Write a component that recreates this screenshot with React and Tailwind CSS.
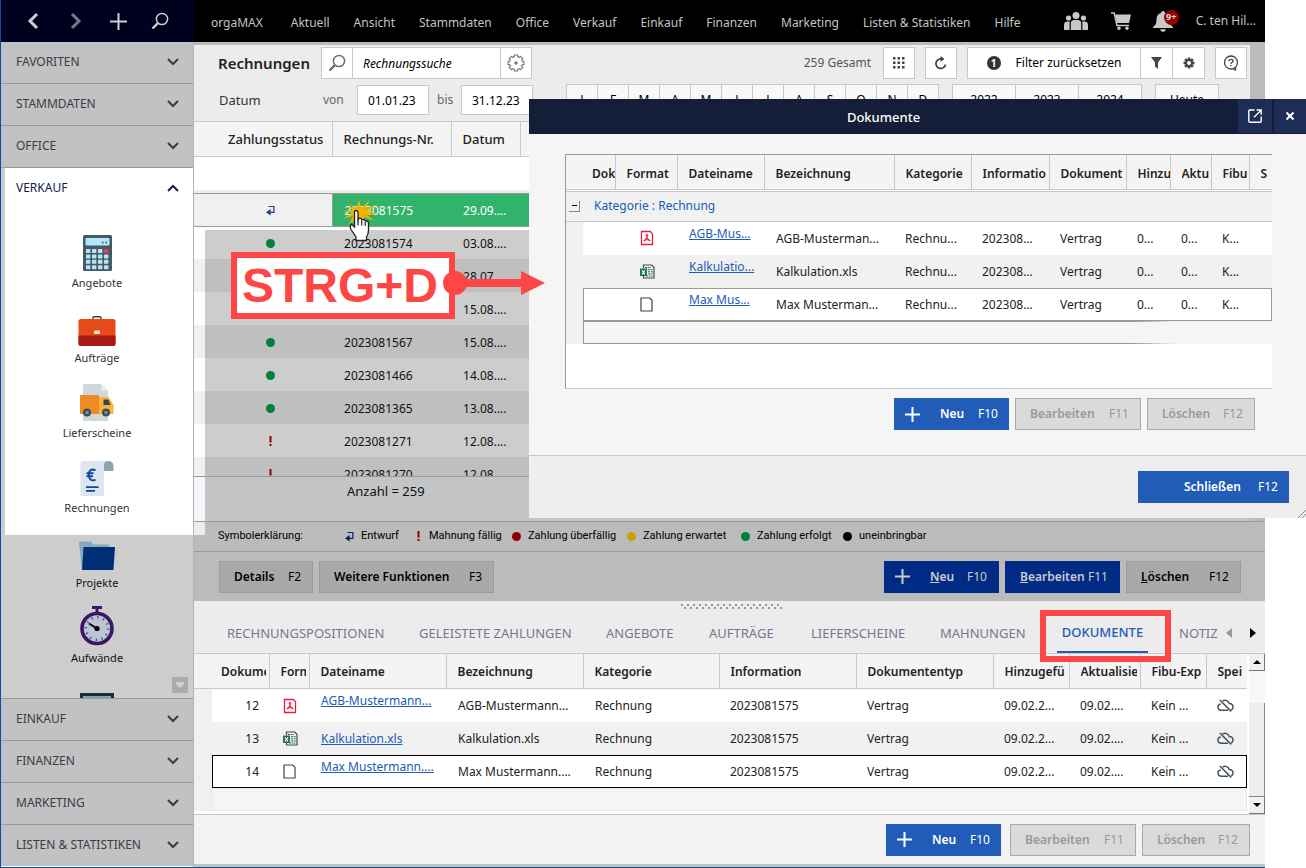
import React from 'react';

const MENU = ['Aktuell', 'Ansicht', 'Stammdaten', 'Office', 'Verkauf', 'Einkauf', 'Finanzen', 'Marketing', 'Listen & Statistiken', 'Hilfe'];

const INVOICES = [
  ['ok', '2023081574', '03.08....'],
  ['', '', '28.07....'],
  ['', '', '15.08....'],
  ['ok', '2023081567', '15.08....'],
  ['ok', '2023081466', '14.08....'],
  ['ok', '2023081365', '13.08....'],
  ['due', '2023081271', '12.08....'],
  ['due', '2023081270', '12.08....'],
];

const FILES = [
  { nr: '12', icon: 'pdf', link: 'AGB-Mustermann...', name: 'AGB-Mustermann...', shortLink: 'AGB-Mus...', shortName: 'AGB-Musterman...' },
  { nr: '13', icon: 'xls', link: 'Kalkulation.xls', name: 'Kalkulation.xls', shortLink: 'Kalkulatio...', shortName: 'Kalkulation.xls' },
  { nr: '14', icon: 'doc', link: 'Max Mustermann....', name: 'Max Mustermann....', shortLink: 'Max Mus...', shortName: 'Max Musterman...' },
];

function Chevron({ up }) {
  return (
    <svg width="12" height="8" viewBox="0 0 12 8" fill="none" stroke="currentColor" strokeWidth="2">
      <path d={up ? 'M1 7 6 2l5 5' : 'M1 1l5 5 5-5'} />
    </svg>
  );
}

function Magnifier({ size, stroke }) {
  return (
    <svg width={size} height={size} viewBox="0 0 18 18" fill="none" stroke="currentColor" strokeWidth={stroke}>
      <circle cx="11" cy="7" r="5.6" />
      <path d="M7 11 1.5 16.5" strokeWidth={stroke * 1.6} />
    </svg>
  );
}

function Plus() {
  return (
    <svg width="15" height="15" viewBox="0 0 15 15" stroke="currentColor" strokeWidth="2">
      <path d="M7.5 0v15M0 7.5h15" />
    </svg>
  );
}

function DraftIcon() {
  return (
    <svg width="9" height="11" viewBox="0 0 9 11" fill="none" stroke="currentColor" strokeWidth="1.2">
      <path d="M2.5 1.5h5.4v5.8H2.5" />
      <path d="M4.6 4v6.6L0 7.3z" fill="currentColor" stroke="none" />
    </svg>
  );
}

function FileIcon({ kind }) {
  if (kind === 'pdf') {
    return (
      <svg className="block" width="14" height="16" viewBox="0 0 14 16" fill="none" stroke="#e31b3c" strokeWidth="1.3">
        <path d="M1.5 1.5h8.8l2.2 2.4v10.6h-11z" />
        <path d="M7 4.600v3.200M7 7.800l-2.800 2.800M7 7.800l2.800 2.800" strokeWidth="1.200" />
        <circle cx="7" cy="5.300" r="1" strokeWidth=".8" />
        <path d="M3.600 10.200c.4 1.300 1.800.6 2.300-.4h2.200c.5 1 1.900 1.700 2.300.4" strokeWidth=".9" />
      </svg>
    );
  }
  if (kind === 'xls') {
    return (
      <svg className="block" width="15" height="15" viewBox="0 0 15 15" fill="none">
        <path d="M3.500 4V1h8.200l2.300 2.300V14H3.500v-2" stroke="#4a4a4a" strokeWidth="1.200" />
        <path d="M5 3.500h6M8 5.700h5M8 7.800h5M8 9.900h5M6 12h6.500" stroke="#217346" strokeWidth="1" strokeDasharray="2 .7" />
        <path d="M0 4.500h7v7.500H0z" fill="#217346" />
        <path d="M2 6.300l3 4M5 6.300l-3 4" stroke="#fff" strokeWidth="1.100" />
      </svg>
    );
  }
  return (
    <svg className="block" width="13" height="15" viewBox="0 0 13 15" fill="#fff" stroke="#444" strokeWidth="1.200">
      <path d="M1 1h8.700L12 3.300V14H1z" />
    </svg>
  );
}

function CloudOff() {
  return (
    <svg className="block" width="17" height="13" viewBox="0 0 17 13" fill="none" stroke="#45525c" strokeWidth="1.500">
      <path d="M5.500 2.200C8 .4 11.600 1.600 12.200 4.600c2.200.1 3.800 1.600 3.800 3.500 0 1.300-.7 2.400-1.700 3" />
      <path d="M11 11.300H4.300C2.300 11.300.9 9.900.9 8.100c0-1.700 1.300-3 2.900-3.200" />
      <path d="M2.800 1l11.400 11.400" />
    </svg>
  );
}

function CalculatorIcon() {
  const keys = [];
  for (let r = 0; r < 4; r++) {
    for (let c = 0; c < 4; c++) {
      keys.push(<rect key={`${r}-${c}`} x={3 + c * 6} y={14 + r * 5.400} width="4.400" height="4" rx=".6" fill={r === 0 && c === 3 ? '#f23b4e' : '#b9e3f5'} />);
    }
  }
  return (
    <svg width="29" height="36" viewBox="0 0 29 36">
      <rect width="29" height="36" rx="1.500" fill="#455a64" />
      <rect x="2.500" y="3" width="24" height="7.500" rx="1" fill="#b3e5fc" />
      <path d="M19 7.500h1.500M22.500 7.500H24" stroke="#37474f" strokeWidth="1.500" />
      {keys}
    </svg>
  );
}

function BriefcaseIcon() {
  return (
    <svg width="38" height="30" viewBox="0 0 38 30">
      <path d="M15 4V1.500q0-.8.8-.8h6.400q.8 0 .8.800V4" fill="none" stroke="#424242" strokeWidth="1.400" />
      <rect x=".5" y="3" width="37" height="27" rx="2.500" fill="#e64a19" />
      <path d="M.5 19.500h37v8q0 2.500-2.500 2.500H3q-2.500 0-2.500-2.500z" fill="#a81815" />
      <rect x="16" y="14.500" width="6" height="3.500" rx=".8" fill="#fbe3cd" />
    </svg>
  );
}

function TruckIcon() {
  return (
    <svg width="36" height="37" viewBox="0 0 36 37">
      <path d="M4 0h18.500L29 6.500V37H4z" fill="#cfd8dc" />
      <path d="M22.500 0 29 6.500h-6.500z" fill="#eceff1" />
      <path d="M1 11h19v19H1z" fill="#ef8b22" />
      <path d="M20 13h9.500l5 8v9H20z" fill="#fbb03f" />
      <path d="M24.500 15.500h5l2 5.500h-7z" fill="#37474f" />
      <circle cx="8" cy="28.500" r="4" fill="#37515c" /><circle cx="8" cy="28.500" r="1.700" fill="#78909c" />
      <circle cx="27" cy="28.500" r="4" fill="#37515c" /><circle cx="27" cy="28.500" r="1.700" fill="#78909c" />
    </svg>
  );
}

function InvoiceIcon() {
  return (
    <svg width="34" height="35" viewBox="0 0 34 35">
      <path d="M4 0h24l-4 4v31H.5V4Q.5 0 4 0z" fill="#dde5f1" />
      <path d="M24 10V4.500Q24 0 28.500 0T33.500 4.500V10z" fill="#90a4ae" />
      <path d="M15.500 9.300C11 7 8.800 10 8.800 13.800s2.200 7 6.700 4.800M6.500 12.300h7M6.500 15.300h6.500" fill="none" stroke="#0d47a1" strokeWidth="1.900" />
      <path d="M6 26.200h12.500M6 29.800h9" stroke="#0d47a1" strokeWidth="1.800" />
    </svg>
  );
}

function FolderIcon() {
  return (
    <svg width="36" height="30" viewBox="0 0 36 30">
      <path d="M0 1.500Q0 .5 1 .5h11l2.500 3H29q1 0 1 1V29H3z" fill="#84aac2" />
      <path d="M4.500 6H36l-1.500 23H3z" fill="#002f77" />
    </svg>
  );
}

function StopwatchIcon() {
  return (
    <svg width="34" height="40" viewBox="0 0 34 40">
      <path d="M12 1.500h10M17 2v4" stroke="#3c1564" strokeWidth="3" />
      <circle cx="17" cy="22.500" r="15" fill="#bcc4d6" stroke="#3c1564" strokeWidth="3.600" />
      <circle cx="17" cy="22.500" r="11.200" fill="none" stroke="#2f5c66" strokeWidth="2.600" strokeDasharray="1.200 4.664" />
      <path d="M9 17.500l8 5" stroke="#000" strokeWidth="2" />
      <circle cx="17" cy="22.500" r="2.600" />
    </svg>
  );
}

function RegisterIcon() {
  return (
    <svg width="34" height="28" viewBox="0 0 34 28">
      <rect width="34" height="28" fill="#12313c" />
      <rect x="3" y="3" width="28" height="20" fill="#84a0aa" />
    </svg>
  );
}

function PeopleIcon() {
  return (
    <svg width="24" height="18" viewBox="0 0 24 18" fill="#c8c8c8">
      <circle cx="12" cy="3.500" r="3.500" /><circle cx="4.500" cy="6" r="2.600" /><circle cx="19.500" cy="6" r="2.600" />
      <path d="M6.800 18v-6.500q0-3.500 3.500-3.500h3.400q3.500 0 3.500 3.500V18z" />
      <path d="M0 18v-5q0-3.500 3.500-3.500H6q-.4 1-.4 2V18zM24 18v-5q0-3.500-3.500-3.500H18q.4 1 .4 2V18z" />
    </svg>
  );
}

function CartIcon() {
  return (
    <svg width="20" height="18" viewBox="0 0 20 18" fill="#c8c8c8">
      <path d="M4.200 2.500H20l-2 8.500H6z" />
      <path d="M0 1h3.200l2.800 12.500h12" fill="none" stroke="#c8c8c8" strokeWidth="1.500" />
      <circle cx="8" cy="16.300" r="1.700" /><circle cx="16" cy="16.300" r="1.700" />
    </svg>
  );
}

function BellIcon() {
  return (
    <svg width="20" height="21" viewBox="0 0 20 21" fill="#c8c8c8">
      <path d="M10 0c1.200 0 1.800.8 1.800 1.700C15 2.500 16.500 5 16.500 8.500c0 4.500 1 5.500 3.500 7.500v1H0v-1c2.500-2 3.500-3 3.500-7.500C3.500 5 5 2.500 8.200 1.700 8.200.8 8.800 0 10 0z" />
      <path d="M7 18.300h6q-.5 2.700-3 2.700t-3-2.700z" />
    </svg>
  );
}

function Gear({ solid }) {
  const angles = [0, 45, 90, 135];
  if (solid) {
    return (
      <svg width="12" height="12" viewBox="0 0 18 18" stroke="#444" strokeWidth="4" fill="none">
        {angles.map((a) => <path key={a} d="M9 .8v16.400" transform={`rotate(${a} 9 9)`} />)}
        <circle cx="9" cy="9" r="5.500" fill="#444" stroke="none" /><circle cx="9" cy="9" r="3" fill="#fff" stroke="none" />
      </svg>
    );
  }
  return (
    <svg width="18" height="18" viewBox="0 0 18 18" fill="none">
      {angles.map((a) => <path key={a} d="M9 .5v17" stroke="#777" strokeWidth="4.400" transform={`rotate(${a} 9 9)`} />)}
      <circle cx="9" cy="9" r="7.200" fill="#777" />
      {angles.map((a) => <path key={a} d="M9 1.600v14.800" stroke="#fff" strokeWidth="2.200" transform={`rotate(${a} 9 9)`} />)}
      <circle cx="9" cy="9" r="6" fill="#fff" />
      <circle cx="9" cy="9" r="1.700" fill="#777" />
    </svg>
  );
}

function AccordionHead({ label, lower }) {
  return (
    <button className={`flex h-[42px] w-full shrink-0 items-center justify-between border-[#9b9b9b] bg-[#c1c2c4] pr-[14px] pb-[2px] pl-[15px] text-[#3c3c40] ${lower ? 'border-t' : 'border-b'}`}>
      <span>{label}</span>
      <Chevron />
    </button>
  );
}

function NavItem({ icon, label, compact, dim }) {
  return (
    <a href="#" className={`flex w-full shrink-0 flex-col items-center gap-[3px] ${compact ? 'h-[60px]' : 'h-[75px]'} ${dim ? 'text-[#111]' : 'pr-[4px] text-[#333]'}`}>
      <span className={`flex shrink-0 items-end ${compact ? 'h-[36px]' : 'h-[51px]'}`}>{icon}</span>
      <span className="text-[11px] leading-[18px]">{label}</span>
    </a>
  );
}

function Sidebar() {
  return (
    <nav className="flex w-[193px] shrink-0 flex-col border-r border-[#b4b4b4] pb-px">
      <div className="relative -mr-px flex h-[42px] shrink-0 items-center bg-[#00001f] text-[#d0d0d0]">
        <button aria-label="Zurück" className="flex w-[64px] justify-center">
          <svg width="12" height="18" viewBox="0 0 12 18" fill="none" stroke="currentColor" strokeWidth="3"><path d="M10 2 3 9l7 7" /></svg>
        </button>
        <button aria-label="Vor" className="flex w-[22px] justify-center text-[#77778a]">
          <svg width="12" height="18" viewBox="0 0 12 18" fill="none" stroke="currentColor" strokeWidth="3"><path d="M2 2l7 7-7 7" /></svg>
        </button>
        <button aria-label="Neu" className="flex w-[62px] justify-center">
          <svg width="17" height="17" viewBox="0 0 17 17" stroke="currentColor" strokeWidth="2"><path d="M8.500 0v17M0 8.500h17" /></svg>
        </button>
        <button aria-label="Suchen" className="flex w-[22px] justify-center"><Magnifier size={18} stroke={1.500} /></button>
      </div>
      <AccordionHead label="FAVORITEN" />
      <AccordionHead label="STAMMDATEN" />
      <AccordionHead label="OFFICE" />
      <div className="relative min-h-0 flex-1 overflow-hidden bg-[#cdcdcd]">
        <div className="ml-1 bg-white pb-[15px]">
          <button className="mb-[10px] flex h-[42px] w-full items-center justify-between pr-[14px] pb-[2px] pl-[11px] text-[#14204c]">
            <span>VERKAUF</span>
            <Chevron up />
          </button>
          <NavItem icon={<CalculatorIcon />} label="Angebote" />
          <NavItem icon={<BriefcaseIcon />} label="Aufträge" />
          <NavItem icon={<TruckIcon />} label="Lieferscheine" />
          <NavItem icon={<InvoiceIcon />} label="Rechnungen" />
        </div>
        <NavItem icon={<FolderIcon />} label="Projekte" compact dim />
        <NavItem icon={<StopwatchIcon />} label="Aufwände" dim />
        <NavItem icon={<RegisterIcon />} label="" dim />
        <button aria-label="Mehr anzeigen" className="absolute right-[5px] bottom-[5px] flex size-[16px] items-center justify-center bg-[#aaabad]">
          <svg width="8" height="6" viewBox="0 0 8 6" fill="#d0d0d0"><path d="M0 0h8v2L4 6 0 2z" /></svg>
        </button>
      </div>
      <AccordionHead label="EINKAUF" lower />
      <AccordionHead label="FINANZEN" lower />
      <AccordionHead label="MARKETING" lower />
      <AccordionHead label="LISTEN & STATISTIKEN" lower />
    </nav>
  );
}

function TopMenu() {
  return (
    <header className="flex h-[42px] shrink-0 items-center justify-between bg-black pr-[9px] pl-[17px] text-[#c4c4c4]">
      <div className="flex items-center pt-[4px]">
        <a href="#" className="mr-7">orgaMAX</a>
        <div className="flex gap-6">
          {MENU.map((m) => <a key={m} href="#" className="whitespace-nowrap">{m}</a>)}
        </div>
      </div>
      <div className="flex items-center">
        <button aria-label="Kontakte" className="mr-[23px]"><PeopleIcon /></button>
        <button aria-label="Warenkorb" className="mr-[22px]"><CartIcon /></button>
        <button aria-label="Meldungen" className="relative mr-[23px]">
          <BellIcon />
          <span className="absolute -top-[1px] left-[11px] flex size-[15px] items-center justify-center rounded-full bg-[#970000] text-[9px] font-bold text-[#ddd]">9+</span>
        </button>
        <span className="whitespace-nowrap">C. ten Hil...</span>
      </div>
    </header>
  );
}

const BOX = 'flex h-[32px] items-center justify-center border border-[#c8c8c8] bg-white';

function Toolbar() {
  return (
    <div className="h-[76px] shrink-0 bg-[#ececec]">
      <div className="flex items-center pt-[2px] pr-[3px] pl-[24px]">
        <h1 className="w-[103px] text-[15px] font-semibold text-[#222]">Rechnungen</h1>
        <div className={`${BOX} w-[32px] text-[#6a6a6a]`}><Magnifier size={18} stroke={1.500} /></div>
        <input aria-label="Rechnungssuche" defaultValue="Rechnungssuche" className="h-[32px] w-[148px] border-y border-[#c8c8c8] bg-white pl-[10px] text-black italic outline-none" />
        <button aria-label="Sucheinstellungen" className={`${BOX} -ml-px w-[32px]`}><Gear /></button>
        <span className="ml-auto text-[#555]">259 Gesamt</span>
        <button aria-label="Raster" className={`${BOX} ml-[12px] w-[32px]`}>
          <svg width="12" height="12" viewBox="0 0 12 12" fill="#444">
            {[0, 4.500, 9].map((y) => [0, 4.500, 9].map((x) => <rect key={`${x}${y}`} x={x} y={y} width="2.500" height="2.500" />))}
          </svg>
        </button>
        <button aria-label="Aktualisieren" className={`${BOX} ml-[10px] w-[32px]`}>
          <svg width="12" height="14" viewBox="0 0 12 14" fill="none" stroke="#444" strokeWidth="1.700"><path d="M10.500 8.500A4.800 4.800 0 1 1 7 3" /><path d="M5.500 0v6L9.500 3z" fill="#444" stroke="none" /></svg>
        </button>
        <button className={`${BOX} ml-[10px] w-[174px] gap-[15px] text-black`}>
          <span className="flex size-[14px] items-center justify-center rounded-full bg-[#333] text-[10px] font-bold text-white">1</span>
          Filter zurücksetzen
        </button>
        <button aria-label="Filter" className={`${BOX} -ml-px w-[33px]`}>
          <svg width="11" height="12" viewBox="0 0 11 12" fill="#444"><path d="M0 0h11L7 5.500V12L4 9.500v-4z" /></svg>
        </button>
        <button aria-label="Einstellungen" className={`${BOX} -ml-px w-[33px]`}><Gear solid /></button>
        <button aria-label="Hilfe" className={`${BOX} ml-[10px] w-[32px]`}>
          <svg width="16" height="16" viewBox="0 0 16 16" fill="none" stroke="#444" strokeWidth="1.300">
            <circle cx="8" cy="7.500" r="6.500" /><path d="M6 6.300q0-1.900 2-1.900t2 1.600q0 1-1 1.500T8 9M8 10v1.300M9.500 13.500l3 1.500v-3" />
          </svg>
        </button>
      </div>
      <div className="mt-[5px] flex h-[32px] items-center pl-[25px] whitespace-nowrap">
        <span className="w-[104px] text-[13px] text-[#333]">Datum</span>
        <label htmlFor="from" className="w-[34px] text-[#666]">von</label>
        <input id="from" defaultValue="01.01.23" className="h-[30px] w-[72px] border border-[#c8c8c8] bg-white pl-[10px] text-black" />
        <label htmlFor="to" className="w-[32px] pl-[8px] text-[#666]">bis</label>
        <input id="to" defaultValue="31.12.23" className="h-[30px] w-[72px] border border-[#c8c8c8] bg-white pl-[10px] text-black" />
        <div className="ml-[33px] flex border-l border-[#c8c8c8]">
          {['J', 'F', 'M', 'A', 'M', 'J', 'J', 'A', 'S', 'O', 'N', 'D'].map((m, i) => (
            <button key={i} className="h-[32px] w-[31px] border-y border-r border-[#c8c8c8] bg-[#f8f8f8] text-black">{m}</button>
          ))}
        </div>
        <div className="ml-[13px] flex border-l border-[#c8c8c8]">
          {['2022', '2023', '2024'].map((y) => (
            <button key={y} className="h-[32px] w-[63px] border-y border-r border-[#c8c8c8] bg-[#f8f8f8] text-black">{y}</button>
          ))}
        </div>
        <button className="ml-[13px] h-[32px] w-[64px] border border-[#c8c8c8] bg-[#f8f8f8] text-black">Heute</button>
      </div>
    </div>
  );
}

function Status({ kind }) {
  if (kind === 'ok') return <span className="mx-auto block size-[9px] rounded-full bg-[#00803a]" />;
  if (kind === 'due') return <svg className="mx-auto block" width="3" height="10" viewBox="0 0 3 10" fill="#8b0000"><path d="M.5 0h2v6.500h-2zM.5 8h2v2h-2z" /></svg>;
  return null;
}

function InvoiceList() {
  return (
    <div className="min-h-0 flex-1 overflow-hidden bg-white">
      <table className="w-full table-fixed border-collapse text-left">
        <colgroup>
          <col className="w-[11px]" /><col className="w-[127px]" /><col className="w-[119px]" /><col className="w-[69px]" /><col />
        </colgroup>
        <thead>
          <tr className="h-[35px] border-y border-[#c8c8c8] bg-[#f4f4f4] text-[13px] text-[#222]">
            <th colSpan={2} className="border-r border-[#c8c8c8] pl-[34px] font-medium">Zahlungsstatus</th>
            <th className="border-r border-[#c8c8c8] pl-[11px] font-medium">Rechnungs-Nr.</th>
            <th className="border-r border-[#c8c8c8] pl-[11px] font-medium">Datum</th>
            <th />
          </tr>
        </thead>
        <tbody>
          <tr className="h-[33px]"><td colSpan={5} /></tr>
          <tr className="h-[4px] bg-[#ececec]"><td colSpan={5} /></tr>
          <tr className="h-[33px] border-y border-[#9b9b9b]">
            <td colSpan={2} className="border-r border-[#9b9b9b] bg-[#f0f0f0] pl-[15px] text-[#1f3d8f]"><span className="flex justify-center"><DraftIcon /></span></td>
            <td className="bg-[#31b36b] pt-[2px] pl-[12px] text-white">2023081575</td>
            <td className="bg-[#31b36b] pt-[2px] pl-[12px] text-white">29.09....</td>
            <td className="bg-[#31b36b]" />
          </tr>
          <tr className="h-[3px]"><td colSpan={5} /></tr>
          {INVOICES.map(([kind, nr, date], i) => (
            <tr key={i} className={`${i === 0 ? 'h-[29px]' : 'h-[33px]'} ${i % 2 ? 'bg-[#bfbfbf]' : 'bg-[#cdcdcd]'} text-[#111]`}>
              <td className={i % 2 ? 'bg-[#f0f0f0]' : 'bg-white'} />
              <td className={`pl-[4px] ${i === 0 ? 'pb-[2px]' : 'pt-[2px]'}`}><Status kind={kind} /></td>
              <td className={`pl-[12px] ${i === 0 ? 'pb-[1px]' : 'pt-[4px]'}`}>{nr}</td>
              <td className={`pl-[12px] ${i === 0 ? 'pb-[1px]' : 'pt-[4px]'}`}>{date}</td>
              <td />
            </tr>
          ))}
        </tbody>
      </table>
    </div>
  );
}

function Dot({ className }) {
  return <span className={`size-[9px] rounded-full ${className}`} />;
}

function Legend() {
  return (
    <div className="relative flex h-[31px] shrink-0 items-center border-y border-[#9b9b9b] bg-[#bbb] pl-[24px] font-[Roboto,sans-serif] text-[11px] whitespace-nowrap text-black">
      <span className="absolute top-0 left-0 h-[13px] w-[11px] bg-[#ededed]" />
      <span className="w-[127px]">Symbolerklärung:</span>
      <span className="flex w-[72px] items-center gap-[7px] text-[#0a1c6e]"><DraftIcon /><span className="text-black">Entwurf</span></span>
      <span className="flex w-[95px] items-center"><span className="mr-[9px]"><Status kind="due" /></span>Mahnung fällig</span>
      <span className="flex w-[115px] items-center gap-[7px]"><Dot className="bg-[#8b0000]" />Zahlung überfällig</span>
      <span className="flex w-[114px] items-center gap-[7px]"><Dot className="bg-[#cda000]" />Zahlung erwartet</span>
      <span className="flex w-[102px] items-center gap-[7px]"><Dot className="bg-[#00803a]" />Zahlung erfolgt</span>
      <span className="flex items-center gap-[7px]"><Dot className="bg-black" />uneinbringbar</span>
    </div>
  );
}

const GREY = 'flex h-[32px] items-center justify-between border border-[#9b9b9b] bg-[#a9a9a9] pr-[11px] pl-[14px] text-black';
const OFF = 'flex h-[32px] items-center justify-between border border-[#a9a9a9] bg-[#dadada] pr-[11px] pl-[14px] text-[#999]';
const BLUE = 'flex h-[32px] items-center bg-[#205cb8] pl-[11px] text-white';

function ActionBar() {
  return (
    <div className="flex h-[49px] shrink-0 items-center bg-[#bbb] pt-px pr-[24px] pl-[25px]">
      <button className={`${GREY} w-[94px]`}><b className="font-semibold">Details</b>F2</button>
      <button className={`${GREY} ml-[6px] w-[175px]`}><b className="font-semibold">Weitere Funktionen</b>F3</button>
      <button className="ml-auto flex h-[32px] w-[115px] items-center bg-[#002b85] pl-[11px] text-[#ccc]">
        <Plus /><b className="ml-[20px] font-semibold"><u>N</u>eu</b><span className="ml-auto pr-[12px]">F10</span>
      </button>
      <button className="ml-[6px] flex h-[32px] w-[115px] items-center justify-between bg-[#002b85] pr-[12px] pl-[15px] text-[#ccc]">
        <b className="font-semibold"><u>B</u>earbeiten</b>F11
      </button>
      <button className={`${GREY} ml-[6px] w-[115px]`}><b className="font-semibold"><u>L</u>öschen</b>F12</button>
    </div>
  );
}

function DocumentActions({ wide }) {
  return (
    <>
      <button className={`${BLUE} w-[115px]`}>
        <Plus /><b className="ml-[20px] font-semibold">Neu</b><span className="ml-auto pr-[11px]">F10</span>
      </button>
      <button disabled className={`${OFF} w-[126px] ${wide ? 'ml-[9px]' : 'ml-[6px]'}`}><b className="font-semibold">Bearbeiten</b>F11</button>
      <button disabled className={`${OFF} ml-[6px] w-[108px]`}><b className="font-semibold">Löschen</b>F12</button>
    </>
  );
}

const TABS = [
  ['RECHNUNGSPOSITIONEN', 'w-[192px]'], ['GELEISTETE ZAHLUNGEN', 'w-[187px]'], ['ANGEBOTE', 'w-[103px]'], ['AUFTRÄGE', 'w-[102px]'],
  ['LIEFERSCHEINE', 'w-[129px]'], ['MAHNUNGEN', 'w-[123px]'],
];

const DETAIL_COLS = [
  ['Dokume', 'w-[75px]'], ['Form', 'w-[40px]'], ['Dateiname', 'w-[137px]'], ['Bezeichnung', 'w-[137px]'], ['Kategorie', ''],
  ['Information', 'w-[137px]'], ['Dokumententyp', 'w-[137px]'], ['Hinzugefü', 'w-[76px]'], ['Aktualisie', 'w-[71px]'], ['Fibu-Exp', 'w-[66px]'], ['Spei', 'w-[41px]'],
];

function ScrollBar() {
  const cell = 'flex h-[17px] items-center justify-center border-r border-b border-[#777] bg-[#f0f0f0]';
  return (
    <div className="flex w-[16px] shrink-0 flex-col bg-[#f7f7f7]">
      <button aria-label="Nach oben" className={cell}><svg width="8" height="4"><path d="M0 4h8L4 0z" /></svg></button>
      <div className="mt-[32px] flex-1 border-r border-b border-[#888] bg-[#eee]" />
      <button aria-label="Nach unten" className={cell}><svg width="8" height="4"><path d="M0 0h8L4 4z" /></svg></button>
    </div>
  );
}

function DetailPanel() {
  return (
    <section className="relative flex shrink-0 flex-col bg-[#ececec]">
      <div className="flex h-[53px] items-center border-b border-[#c8c8c8] pt-[12px] pl-[33px] text-[13px] whitespace-nowrap text-[#77778c]">
        {TABS.map(([t, w]) => <button key={t} className={`shrink-0 text-left ${w}`}>{t}</button>)}
        <button className="-ml-[6px] h-[40px] w-[91px] shrink-0 border-b-2 border-[#205cb8] font-medium text-[#205cb8]">DOKUMENTE</button>
        <button className="ml-[31px] w-[38px] shrink-0 text-left">NOTIZ</button>
        <div className="ml-auto flex gap-[18px] pr-[9px]">
          <button aria-label="Tabs zurück"><svg width="6" height="10" fill="#999"><path d="M6 0v10L0 5z" /></svg></button>
          <button aria-label="Tabs weiter"><svg width="6" height="10"><path d="M0 0v10l6-5z" /></svg></button>
        </div>
      </div>
      <svg className="absolute top-[3px] left-[487px]" width="102" height="6" fill="#999">
        {Array.from({ length: 17 }, (_, i) => <path key={i} d={`M${i * 6} 0h2v2h-2zM${i * 6 + 3} 3h2v2h-2z`} />)}
      </svg>
      <div className="flex bg-white">
        <div className="mr-[2px] min-w-0 flex-1">
          <table className="w-full table-fixed border-collapse text-left text-[#222]">
            <colgroup>{DETAIL_COLS.map(([c, w]) => <col key={c} className={w} />)}</colgroup>
            <thead>
              <tr className="h-[35px] border-b border-[#c8c8c8] bg-[#f4f4f4]">
                {DETAIL_COLS.map(([c], i) => (
                  <th key={c} className={`border-r border-[#c8c8c8] pt-[3px] pr-[3px] font-semibold last:border-r-0 ${i === 0 ? 'pl-[27px]' : 'pl-[11px]'}`}>
                    <span className="block overflow-hidden whitespace-nowrap">{c}</span>
                  </th>
                ))}
              </tr>
            </thead>
          </table>
          <div className="border-l-[18px] border-[#f0f0f0]">
            {FILES.map((f, i) => (
              <table key={f.nr} className={`w-full table-fixed border-collapse text-left text-[#222] ${i === 2 ? 'outline outline-1 -outline-offset-1 outline-black' : ''} ${i === 1 ? 'bg-[#f1f1f1]' : 'bg-white'}`}>
                <colgroup><col className="w-[58px]" />{DETAIL_COLS.slice(1).map(([c, w]) => <col key={c} className={w} />)}</colgroup>
                <tbody>
                  <tr className="h-[33px] whitespace-nowrap">
                    <td className="pr-[11px] text-right">{f.nr}</td>
                    <td className="pl-[13px]"><FileIcon kind={f.icon} /></td>
                    <td className={`pl-[11px] ${i === 1 ? '' : 'pb-[9px]'}`}><a href="#" className="text-[#205cb8] underline">{f.link}</a></td>
                    <td className="pl-[11px]">{f.name}</td>
                    <td className="pl-[11px]">Rechnung</td>
                    <td className="pl-[11px]">2023081575</td>
                    <td className="pl-[11px]">Vertrag</td>
                    <td className="pl-[11px]">09.02.2...</td>
                    <td className="pl-[11px]">09.02....</td>
                    <td className="pl-[11px]">Kein ...</td>
                    <td className="pl-[11px]"><CloudOff /></td>
                  </tr>
                </tbody>
              </table>
            ))}
            <div className="h-[23px] border border-[#e8e8e8] bg-[#f4f5f7]" />
          </div>
          <div className="h-[3px]" />
        </div>
        <ScrollBar />
      </div>
      <div className="flex h-[50px] items-center justify-end border-t border-[#c8c8c8] bg-[#f3f3f3] pr-[15px]"><DocumentActions wide /></div>
      <div className="h-[3px] bg-[#c3c3c3]" />
    </section>
  );
}

const DIALOG_COLS = [
  ['Dok', 'w-[49px]'], ['Format', 'w-[62px]'], ['Dateiname', 'w-[87px]'], ['Bezeichnung', ''], ['Kategorie', 'w-[77px]'], ['Informatio', 'w-[78px]'],
  ['Dokument', 'w-[77px]'], ['Hinzu', 'w-[44px]'], ['Aktu', 'w-[41px]'], ['Fibu', 'w-[38px]'], ['S', 'w-[23px]'],
];

function Dialog() {
  return (
    <div role="dialog" aria-label="Dokumente" className="absolute top-[99px] right-0 left-[529px] bg-[#f5f5f5]">
      <div className="flex h-[35px] bg-[#141e38] text-white">
        <h2 className="flex flex-1 items-center justify-center text-[13px] font-medium">Dokumente</h2>
        <button aria-label="Eigenes Fenster" className="flex h-[34px] w-[34px] items-center justify-center bg-[#1e2d55]">
          <svg width="14" height="14" viewBox="0 0 14 14" fill="none" stroke="currentColor" strokeWidth="1.400"><path d="M6.500 1H2Q.8 1 .8 2v10q0 1.200 1.200 1.200h10q1.200 0 1.200-1.200V7.500M8.500 1h4.700v4.700M13 1.200 6 8.200" /></svg>
        </button>
        <button aria-label="Dialog schließen" className="ml-[2px] flex h-[34px] w-[32px] items-center justify-center bg-[#1e2d55]">
          <svg width="8" height="8" viewBox="0 0 8 8" stroke="currentColor" strokeWidth="2"><path d="M.5.5l7 7M7.500.5l-7 7" /></svg>
        </button>
      </div>
      <div className="pt-[20px] pr-[34px] pl-[36px]">
        <div className="h-[235px] border-t border-b border-l border-t-[#999] border-b-[#c8c8c8] border-l-[#999] bg-white">
          <table className="w-full table-fixed border-collapse text-left text-[#222]">
            <colgroup>{DIALOG_COLS.map(([c, w]) => <col key={c} className={w} />)}</colgroup>
            <thead>
              <tr className="h-[34px] border-b border-[#c8c8c8] bg-[#f4f4f4]">
                {DIALOG_COLS.map(([c], i) => (
                  <th key={c} className={`border-r border-[#c8c8c8] pt-[4px] font-semibold last:border-r-0 ${i === 0 ? 'pl-[26px]' : 'pl-[11px]'}`}>
                    <span className="block overflow-hidden whitespace-nowrap">{c}</span>
                  </th>
                ))}
              </tr>
            </thead>
          </table>
          <div className="mt-px flex h-[31px] items-center border-y border-[#c8c8c8] bg-[#f1f1f1] text-[#205cb8]">
            <button aria-label="Gruppe zuklappen" className="mr-[14px] ml-[3px] flex size-[11px] items-center justify-center border-r border-b border-[#888]"><span className="h-px w-[5px] bg-black" /></button>
            Kategorie : Rechnung
          </div>
          <div className="border-l-[17px] border-[#f1f1f1]">
            {FILES.map((f, i) => (
              <table key={f.nr} className={`w-full table-fixed border-collapse text-left text-[#222] ${i === 2 ? 'outline outline-1 -outline-offset-1 outline-[#999]' : ''} ${i === 1 ? 'bg-[#f1f1f1]' : 'bg-white'}`}>
                <colgroup><col className="w-[33px]" />{DIALOG_COLS.slice(1).map(([c, w]) => <col key={c} className={w} />)}</colgroup>
                <tbody>
                  <tr className="h-[33px] whitespace-nowrap">
                    <td />
                    <td className="pl-[24px]"><FileIcon kind={f.icon} /></td>
                    <td className="pb-[9px] pl-[11px]"><a href="#" className="text-[#205cb8] underline">{f.shortLink}</a></td>
                    <td className="pt-[2px] pl-[11px]">{f.shortName}</td>
                    <td className="pt-[2px] pl-[11px]">Rechnu...</td>
                    <td className="pt-[2px] pl-[11px]">202308...</td>
                    <td className="pt-[2px] pl-[11px]">Vertrag</td>
                    <td className="pt-[2px] pl-[11px]">0...</td>
                    <td className="pt-[2px] pl-[11px]">0...</td>
                    <td className="pt-[2px] pl-[11px]">K...</td>
                    <td />
                  </tr>
                </tbody>
              </table>
            ))}
            <div className="bg-linear-to-r from-[#999] from-80% to-[#f4f5f7] to-86% py-px pl-px"><div className="h-[21px] bg-[#f4f5f7]" /></div>
          </div>
        </div>
      </div>
      <div className="mt-[9px] flex justify-end pr-[51px]"><DocumentActions /></div>
      <div className="relative mt-[25px] flex h-[63px] items-center justify-end border-t border-[#c8c8c8] bg-[#eee] pr-[17px]">
        <button className="flex h-[32px] w-[151px] items-center justify-between bg-[#205cb8] pr-[11px] pl-[46px] text-white"><b className="font-semibold">Schließen</b>F12</button>
        <svg className="absolute right-0 bottom-0" width="9" height="9" stroke="#888"><path d="M1 9l8-8M5 9l4-4" /></svg>
      </div>
    </div>
  );
}

function Annotations() {
  return (
    <>
      <div className="absolute top-[610px] left-[1040px] h-[52px] w-[131px] border-6 border-[#ff4646]" />
      <div className="absolute top-[252px] left-[231px] flex h-[67px] w-[224px] items-center justify-center border-6 border-[#ff4646] bg-white pr-[6px] font-['Liberation_Sans',sans-serif] text-[48px] leading-none font-bold text-[#ff4646]">STRG+D</div>
      <svg className="absolute top-[271px] left-[443px]" width="102" height="24" fill="#ff4646">
        <circle cx="12" cy="12" r="12" /><path d="M12 8h66V0l24 12-24 12v-8H12z" />
      </svg>
      <svg className="absolute top-[198px] left-[341px]" width="40" height="46" viewBox="0 0 40 46">
        <path d="M14 11 6 4l9 6 3-8 2 8 9-8-5 9 13-5-10 7 10 3-11 1 8 6-11-4-2 8-4-7-9 7 4-9-10 3 9-6-9-2 10-1-6-5z" fill="#f0b400" />
        <path d="M13.500 14.500q0-2 1.700-2t1.800 2V24l.5-3.500q3-.7 3.300 1.300 3-.8 3.500 1.200 3.200-.4 3.200 2.200v7q0 3.800-2 6.800v3.500H15v-3.500l-5-7.500q-1.800-3 .5-5.500l3 3z" fill="#fff" stroke="#222" strokeWidth="1.300" />
        <path d="M17 24v3.500M20.700 22.500v5M24.200 23.500v4.500" stroke="#222" strokeWidth="1.200" />
      </svg>
    </>
  );
}

export default function App() {
  return (
    <div className="relative h-screen min-h-[640px] overflow-hidden bg-white pr-[41px] font-['Noto_Sans','Open_Sans',sans-serif] text-[12px] leading-[18px]">
      <div className="flex h-full border-b border-l border-[#0a4fa0]">
        <Sidebar />
        <main className="flex min-w-0 flex-1 flex-col">
          <TopMenu />
          <div className="flex min-h-0 flex-1 flex-col bg-[#bbb] pt-[3px] pr-[15px]">
            <Toolbar />
            <InvoiceList />
            <div className="flex h-[45px] shrink-0 border-t border-[#9b9b9b] bg-[#c3c4c6] text-[#111]">
              <div className="w-[11px] bg-[#f5f6f9]" />
              <div className="pt-[5px] pl-[142px] text-[13px]">Anzahl = 259</div>
            </div>
          </div>
          <Legend />
          <ActionBar />
          <DetailPanel />
        </main>
      </div>
      <Dialog />
      <Annotations />
    </div>
  );
}
